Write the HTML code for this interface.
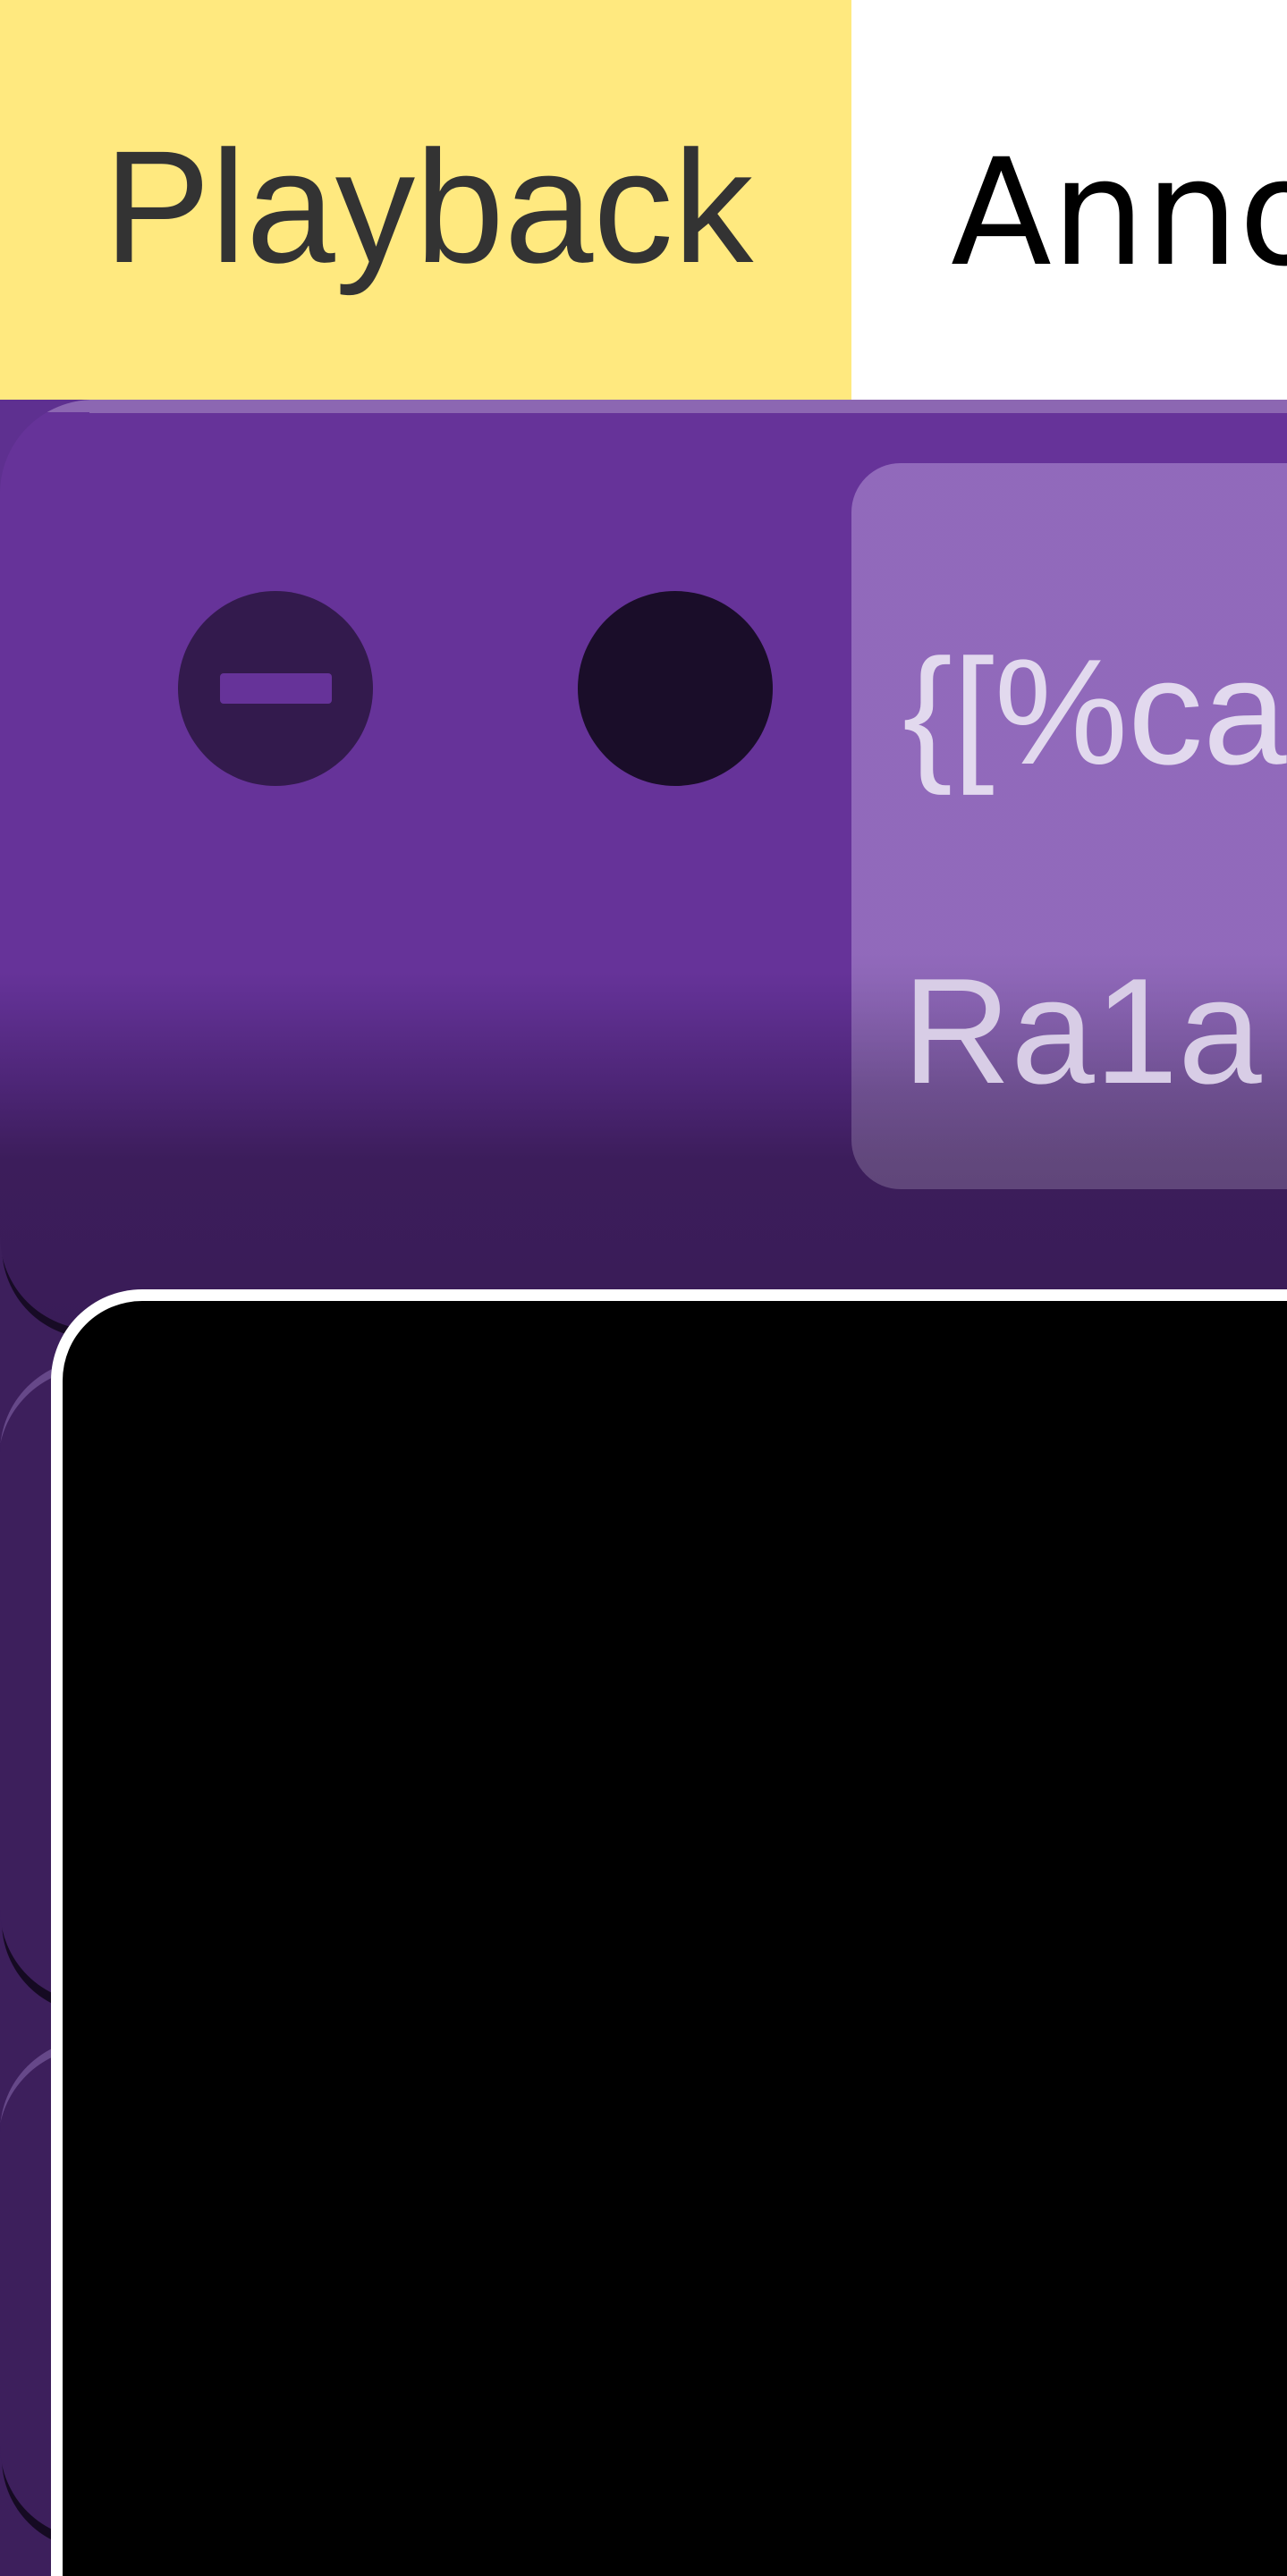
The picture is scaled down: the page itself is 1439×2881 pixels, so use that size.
<!DOCTYPE html>
<html><head><meta charset="utf-8"><style>
html,body{margin:0;padding:0;width:1439px;height:2881px;overflow:hidden}
body{font-family:"Liberation Sans",sans-serif}
#w{position:relative;width:1439px;height:2881px;overflow:hidden;background:#3d1f5c}
.tab1{position:absolute;left:0;top:0;width:952px;height:447px;background:#ffe97f}
.tab1 span{position:absolute;left:116px;top:131px;font-size:179px;line-height:200px;color:#333}
.tab2{position:absolute;left:952px;top:0;width:487px;height:447px;background:#fff;overflow:hidden}
.tab2 span{position:absolute;left:111px;top:138px;font-family:"DejaVu Sans",sans-serif;font-size:165px;line-height:200px;color:#000;white-space:nowrap}
.panel{position:absolute;left:0;width:1600px;border-radius:105px;box-shadow:0 14px 0 -2px #150a22, inset 0 12px 0 -2px rgba(180,150,220,.35);background:#3d1f5c}
.p1{top:447px;height:1040px;border-radius:105px;background:linear-gradient(180deg,#8c67b2 0,#8c67b2 14px,#663399 14px,#663399 640px,#5e2f8f 680px,#4c2575 770px,#3c1d5b 850px,#391c57 1040px);box-shadow:0 12px 0 -2px #170b25}
.topstrip{position:absolute;left:0;top:447px;width:1439px;height:15px;background:#8c67b2}
.c{position:absolute;width:218px;height:218px;border-radius:50%}
.c1{left:199px;top:661px;background:#331a4d}
.c2{left:646px;top:661px;background:#1a0d29}
.bar{position:absolute;left:246px;top:753px;width:125px;height:34px;border-radius:4px;background:#663399}
.box{position:absolute;left:952px;top:518px;width:487px;height:812px;border-radius:55px 0 0 55px;background:linear-gradient(180deg,rgba(180,150,215,.55) 0,rgba(180,150,215,.55) 550px,rgba(150,130,175,.45) 700px,rgba(140,120,160,.45) 812px);overflow:hidden}
.t{position:absolute;left:57px;font-size:168px;line-height:200px;color:#e2d9ee;white-space:nowrap}
.black{position:absolute;left:57px;top:1442px;width:1382px;height:1439px;background:#000;border:13px solid #fff;border-right:none;border-bottom:none;border-radius:102px 0 0 0;box-sizing:border-box}
</style></head><body><div id="w">
<div class="tab1"><span>Playback</span></div>
<div class="tab2"><span>Annotate</span></div>
<div class="panel" style="top:2280px;height:560px"></div>
<div class="panel" style="top:1520px;height:720px"></div>
<div style="position:absolute;left:0;top:447px;width:200px;height:200px;background:#5e3090"></div>
<div class="panel p1"></div>
<div class="topstrip" style="left:100px"></div>
<div class="c c1"></div><div class="bar"></div>
<div class="c c2"></div>
<div class="box">
<div class="t" style="top:178px;color:#e2d9ee">{[%ca</div>
<div class="t" style="top:535px;color:#d8cde6">Ra1a</div>
</div>
<div class="black"></div>
</div></body></html>
